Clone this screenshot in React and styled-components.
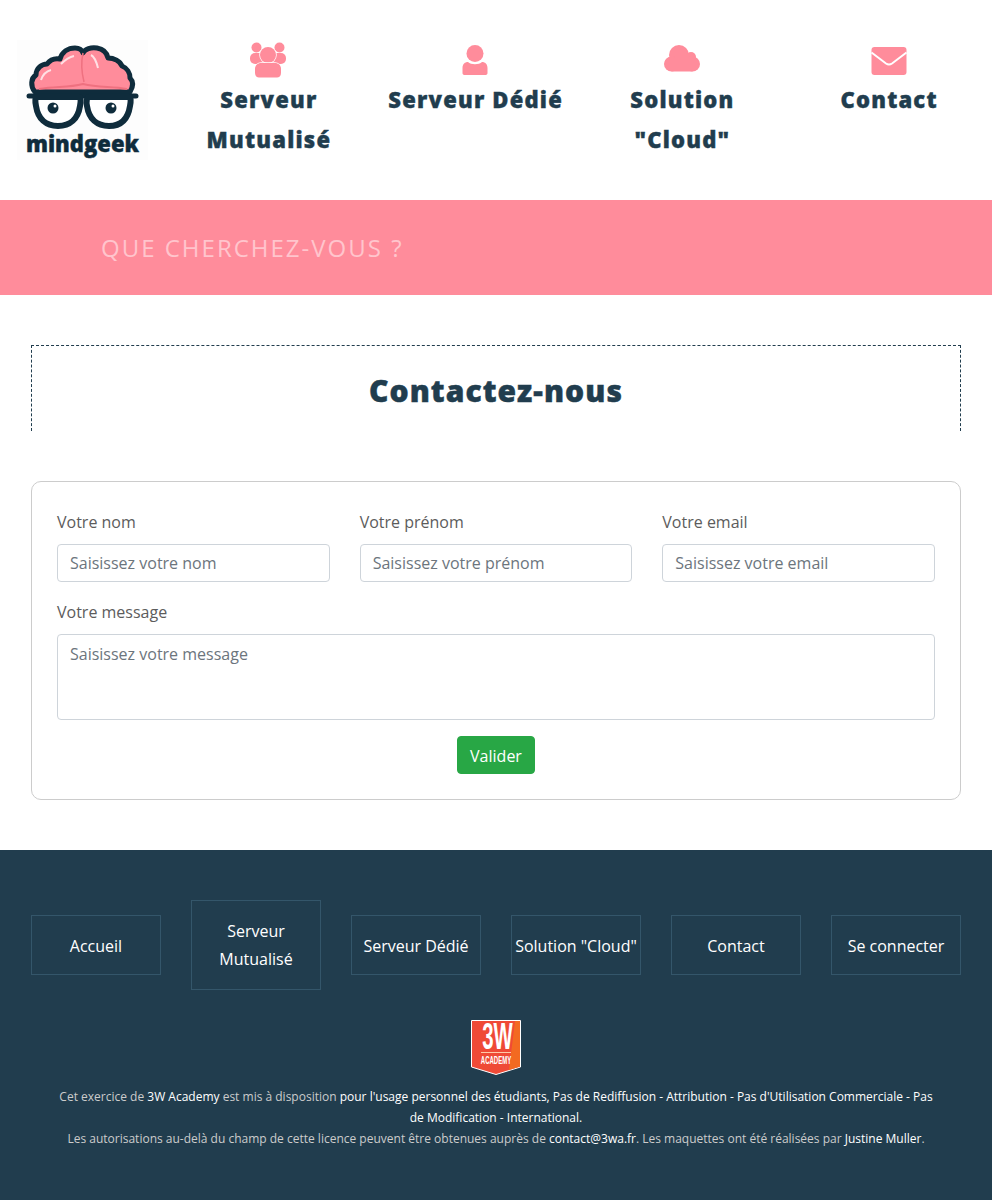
import React from "react";
import styled, { createGlobalStyle } from "styled-components";

const GlobalStyle = createGlobalStyle`
  * { box-sizing: border-box; }
  body {
    margin: 0;
    background: #fff;
    font-family: "Open Sans", sans-serif;
    font-size: 16px;
    color: #5c5c5c;
  }
`;

const PINK = "#ff8c9b";
const NAVY = "#213d4e";
const INK = "#0f2c3c";

const UsersIcon = () => (
  <svg width="40" height="40" viewBox="0 0 40 40" fill={PINK}>
    <circle cx="8.5" cy="7.5" r="5" />
    <circle cx="31.5" cy="7.5" r="5" />
    <rect x="2" y="13" width="36" height="11" rx="5" />
    <g stroke="#fff" strokeWidth="1.5" paintOrder="stroke">
      <circle cx="20" cy="15" r="8" />
      <path d="M7 33 V29 C7 25 10 23 13 23 H27 C30 23 33 25 33 29 V33 C33 36 31 37.500 29 37.500 H11 C9 37.500 7 36 7 33 Z" strokeLinejoin="round" />
    </g>
  </svg>
);

const UserIcon = () => (
  <svg width="40" height="40" viewBox="0 0 40 40" fill={PINK}>
    <path d="M7.5 33 V28 C7.5 24 10 22 13 22 C16 25 24 25 27 22 C30 22 32.5 24 32.5 28 V33 C32.5 34.500 31.500 35 30 35 H10 C8.500 35 7.500 34.500 7.500 33 Z" />
    <circle cx="20" cy="13.500" r="8.500" />
  </svg>
);

const CloudIcon = () => (
  <svg width="40" height="40" viewBox="0 0 40 40" fill={PINK}>
    <circle cx="17" cy="15" r="10" />
    <circle cx="29" cy="17" r="5" />
    <circle cx="9.500" cy="24" r="7.500" />
    <circle cx="30.500" cy="24" r="7.500" />
    <rect x="9.500" y="18" width="21" height="13.500" />
  </svg>
);

const MailIcon = () => (
  <svg width="40" height="40" viewBox="0 0 40 40">
    <rect x="2.500" y="7" width="35" height="28" rx="3" fill={PINK} />
    <path d="M2.500 12.500 L17 23.500 Q20 25.500 23 23.500 L37.500 12.500" fill="none" stroke="#fff" strokeWidth="2" />
  </svg>
);

const navItems = [
  { icon: UsersIcon, label: "Serveur Mutualisé" },
  { icon: UserIcon, label: "Serveur Dédié" },
  { icon: CloudIcon, label: 'Solution "Cloud"' },
  { icon: MailIcon, label: "Contact" },
];

const footerLinks = ["Accueil", "Serveur Mutualisé", "Serveur Dédié", 'Solution "Cloud"', "Contact", "Se connecter"];

const Logo = () => (
  <LogoBox>
    <svg width="131" height="120" viewBox="0 0 131 120">
      <path
        d="M18 52 C13 46 14 38 19 35 C19 28 25 24 30 24 C33 20 38 18 43 19 C45 12 51 8 58 8 C62 8 65 10 66 13 C68 9 74 7 80 8 C86 9 90 13 91 18 C97 18 103 21 105 26 C110 28 113 33 113 38 C117 42 116 47 113 52 Z"
        fill={PINK}
        stroke={INK}
        strokeWidth="5"
        strokeLinejoin="round"
      />
      <path d="M66 13 C64 22 65 34 67 42" fill="none" stroke="#ef7180" strokeWidth="1.500" />
      <path d="M44 24 C48 20 52 17 57 16 M74 15 C78 17 80 24 81 28 M24 40 C26 34 30 31 34 30" fill="none" stroke="#ffe0e4" strokeWidth="2" />
      <path d="M22 49 C40 46 50 48 66 44 C82 48 95 46 110 49" fill="none" stroke="#ef7180" strokeWidth="2" />
      <path d="M12 56 H119" stroke={INK} strokeWidth="5" strokeLinecap="round" />
      <path
        d="M20 57 H62 C64 57 64 61 63 66 C61 79 53 86 41 86 C29 86 21 79 19 66 C18 61 18 57 20 57 Z"
        fill="#fff"
        stroke={INK}
        strokeWidth="6"
      />
      <path
        d="M72 57 H112 C114 57 114 61 113 66 C111 79 104 86 92 86 C80 86 72 79 70 66 C69 61 70 57 72 57 Z"
        fill="#fff"
        stroke={INK}
        strokeWidth="6"
      />
      <circle cx="36" cy="68" r="5.500" fill={INK} />
      <circle cx="94" cy="68" r="5.500" fill={INK} />
      <circle cx="38" cy="66" r="1.500" fill="#fff" />
      <circle cx="96" cy="66" r="1.500" fill="#fff" />
    </svg>
    <LogoName>mindgeek</LogoName>
  </LogoBox>
);

const AcademyBadge = () => (
  <Badge>
    <svg width="50" height="55" viewBox="0 0 50 55">
      <path d="M0.500 0.500 H49.500 V47 L25 54.500 L0.500 47 Z" fill="#ef4a36" stroke="#fff" />
      <path d="M44 1 H49 V46.500 L38 50 Z" fill="#f36a21" />
    </svg>
    <BadgeTitle>3W</BadgeTitle>
    <BadgeRule />
    <BadgeSub>ACADEMY</BadgeSub>
  </Badge>
);

export default function App() {
  return (
    <>
      <GlobalStyle />
      <Header>
        <Logo />
        <Nav>
          {navItems.map(({ icon: Icon, label }) => (
            <NavItem key={label}>
              <NavIcon>
                <Icon />
              </NavIcon>
              <NavLabel>{label}</NavLabel>
            </NavItem>
          ))}
        </Nav>
      </Header>

      <SearchBand>QUE CHERCHEZ-VOUS ?</SearchBand>

      <Main>
        <TitleBox>
          <Title>Contactez-nous</Title>
        </TitleBox>

        <FormCard>
          <FieldRow>
            <Field>
              <Label>Votre nom</Label>
              <Input placeholder="Saisissez votre nom" />
            </Field>
            <Field>
              <Label>Votre prénom</Label>
              <Input placeholder="Saisissez votre prénom" />
            </Field>
            <Field>
              <Label>Votre email</Label>
              <Input placeholder="Saisissez votre email" />
            </Field>
          </FieldRow>
          <MessageField>
            <Label>Votre message</Label>
            <TextArea placeholder="Saisissez votre message" />
          </MessageField>
          <Submit>Valider</Submit>
        </FormCard>
      </Main>

      <Footer>
        <FooterNav>
          {footerLinks.map((link) => (
            <FooterLink key={link} $tall={link === "Serveur Mutualisé"}>
              {link}
            </FooterLink>
          ))}
        </FooterNav>
        <AcademyBadge />
        <Legal>
          Cet exercice de <b>3W Academy</b> est mis à disposition{" "}
          <b>pour l'usage personnel des étudiants, Pas de Rediffusion - Attribution - Pas d'Utilisation Commerciale - Pas de Modification - International.</b>
          <br />
          Les autorisations au-delà du champ de cette licence peuvent être obtenues auprès de <b>contact@3wa.fr</b>. Les maquettes ont été réalisées par <b>Justine Muller</b>.
        </Legal>
      </Footer>
    </>
  );
}

const Header = styled.header`
  height: 200px;
  display: flex;
  align-items: center;
`;

const LogoBox = styled.div`
  position: relative;
  width: 131px;
  height: 120px;
  margin-left: 17px;
  background: #fdfdfd;
  flex-shrink: 0;
  svg { display: block; }
`;

const LogoName = styled.div`
  position: absolute;
  left: 0;
  right: 0;
  top: 89px;
  text-align: center;
  font-weight: 800;
  font-size: 22px;
  line-height: 28px;
  color: ${INK};
  -webkit-text-stroke: 0.4px ${INK};
`;

const Nav = styled.nav`
  flex: 1;
  margin-left: 17px;
  height: 120px;
  display: grid;
  grid-template-columns: repeat(4, 1fr);
`;

const NavItem = styled.div`
  display: flex;
  flex-direction: column;
  align-items: center;
  text-align: center;
`;

const NavIcon = styled.div`
  height: 40px;
  svg { display: block; }
`;

const NavLabel = styled.div`
  width: 190px;
  margin-top: -1px;
  padding-left: 1px;
  font-weight: 800;
  font-size: 22px;
  line-height: 40px;
  letter-spacing: 1.2px;
  -webkit-text-stroke: 0.4px ${NAVY};
  color: ${NAVY};
`;

const SearchBand = styled.div`
  height: 95px;
  background: ${PINK};
  padding-left: 101px;
  display: flex;
  align-items: center;
  font-size: 24px;
  letter-spacing: 2px;
  color: rgba(255, 255, 255, 0.5);
`;

const Main = styled.main`
  padding: 50px 31px;
`;

const TitleBox = styled.div`
  height: 86px;
  border: 1px dashed ${NAVY};
  border-bottom: none;
  display: flex;
  justify-content: center;
  padding-top: 21px;
`;

const Title = styled.h1`
  margin: 0;
  font-size: 30px;
  line-height: 48px;
  font-weight: 800;
  letter-spacing: 1.05px;
  -webkit-text-stroke: 0.5px ${NAVY};
  color: ${NAVY};
`;

const FormCard = styled.form`
  margin-top: 50px;
  height: 319px;
  padding: 28px 25px 25px;
  border: 1px solid #ccc;
  border-radius: 10px;
  display: flex;
  flex-direction: column;
`;

const FieldRow = styled.div`
  display: grid;
  grid-template-columns: repeat(3, 1fr);
  gap: 30px;
`;

const Field = styled.div`
  margin-bottom: 18px;
`;

const MessageField = styled.div`
  margin-bottom: 16px;
`;

const Label = styled.label`
  display: block;
  line-height: 24px;
  margin-bottom: 10px;
`;

const Input = styled.input`
  display: block;
  width: 100%;
  height: 38px;
  padding: 6px 12px;
  font: 16px/24px "Open Sans", sans-serif;
  color: #495057;
  border: 1px solid #ced4da;
  border-radius: 4px;
  &::placeholder { color: #6c757d; opacity: 1; }
`;

const TextArea = styled.textarea`
  display: block;
  width: 100%;
  height: 86px;
  padding: 7px 12px 6px;
  font: 16px/24px "Open Sans", sans-serif;
  color: #495057;
  border: 1px solid #ced4da;
  border-radius: 4px;
  resize: none;
  &::placeholder { color: #6c757d; opacity: 1; }
`;

const Submit = styled.button`
  align-self: center;
  height: 38px;
  padding: 1px 12px 0;
  font: 16px "Open Sans", sans-serif;
  color: #fff;
  background: #28a745;
  border: 1px solid #28a745;
  border-radius: 4px;
`;

const Footer = styled.footer`
  height: 350px;
  background: ${NAVY};
  padding: 50px 31px 0;
`;

const FooterNav = styled.div`
  display: flex;
  justify-content: space-between;
  align-items: center;
  height: 90px;
`;

const FooterLink = styled.a`
  width: 130px;
  height: ${(p) => (p.$tall ? "90px" : "60px")};
  padding: ${(p) => (p.$tall ? "0 2px" : "1px 2px 0")};
  display: flex;
  align-items: center;
  justify-content: center;
  text-align: center;
  border: 1px solid #34566a;
  color: #fff;
  line-height: 28px;
`;

const Badge = styled.div`
  position: relative;
  width: 50px;
  height: 55px;
  margin: 30px auto 0;
  svg { position: absolute; inset: 0; }
`;

const BadgeTitle = styled.div`
  position: absolute;
  top: -1px;
  left: 0;
  right: 0;
  text-align: center;
  font-family: "Liberation Sans", sans-serif;
  font-weight: 700;
  font-size: 37px;
  line-height: 36px;
  color: #fff;
  transform: scaleX(0.55);
`;

const BadgeRule = styled.div`
  position: absolute;
  top: 32px;
  left: 10px;
  right: 10px;
  height: 1px;
  background: #ffc9a8;
`;

const BadgeSub = styled.div`
  position: absolute;
  top: 35px;
  left: -10px;
  right: -10px;
  text-align: center;
  font-family: "Liberation Sans", sans-serif;
  font-weight: 700;
  font-size: 10px;
  line-height: 11px;
  color: #fff;
  transform: scaleX(0.6);
`;

const Legal = styled.p`
  margin: 11px 0 0;
  padding: 0 20px;
  text-align: center;
  font-size: 12px;
  line-height: 21px;
  color: #ccc;
  b { font-weight: 400; color: #fff; }
`;
